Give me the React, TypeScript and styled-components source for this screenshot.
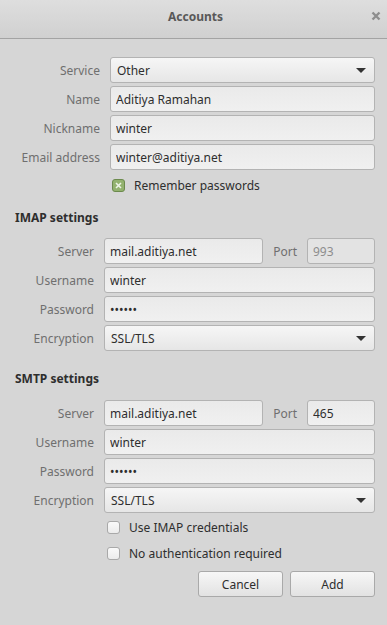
import styled, { createGlobalStyle } from "styled-components";

const Global = createGlobalStyle`
  html, body {
    margin: 0;
    padding: 0;
    background: #d6d6d6;
  }
  * {
    box-sizing: border-box;
  }
`

const Window = styled.div`
  width: 387px;
  height: 625px;
  display: flex;
  flex-direction: column;
  background: #d6d6d6;
  font-family: "Noto Sans", "DejaVu Sans", sans-serif;
  font-size: 12px;
  color: #2e2e2e;
  overflow: hidden;
`

const TitleBar = styled.div`
  height: 39px;
  flex-shrink: 0;
  display: flex;
  align-items: center;
  justify-content: center;
  position: relative;
  background: linear-gradient(#dedede, #d0d0d0);
  border-bottom: 1px solid #a3a3a3;
`

const Title = styled.span`
  font-weight: 700;
  color: #585858;
  margin-left: 4px;
  margin-top: -6px;
`

const CloseButton = styled.button`
  position: absolute;
  right: 3px;
  top: 8px;
  width: 16px;
  height: 16px;
  padding: 0;
  border: none;
  background: none;
  display: flex;
  align-items: center;
  justify-content: center;
`

const Content = styled.div`
  padding: 0 12px 0 15px;
  display: flex;
  flex-direction: column;
`

const FormGrid = styled.div<{ $labelWidth: number; $top: number }>`
  display: grid;
  grid-template-columns: ${(p) => p.$labelWidth}px minmax(0, 1fr);
  column-gap: 10px;
  row-gap: 3px;
  margin-top: ${(p) => p.$top}px;
`

const Label = styled.label`
  display: flex;
  align-items: center;
  justify-content: flex-end;
  height: 26px;
  color: #6f6f6f;
  white-space: nowrap;
`

const Input = styled.input`
  height: 26px;
  width: 100%;
  min-width: 0;
  border: 1px solid #b3b3b3;
  border-radius: 3px;
  background: linear-gradient(#eaeaea, #f0f0f0);
  padding: 0 5px;
  font-family: inherit;
  font-size: 12px;
  color: #2e2e2e;
  outline: none;
  &:disabled {
    color: #8d8d8d;
    background: #e3e3e3;
  }
`

const ServerInput = styled(Input)`
  flex: 1 1 0;
  width: 0;
`

const PortInput = styled(Input)`
  flex: 0 0 68px;
  width: 68px;
`

const Select = styled.div`
  height: 26px;
  display: flex;
  align-items: center;
  justify-content: space-between;
  padding: 0 8px 0 6px;
  border: 1px solid #b3b3b3;
  border-radius: 3px;
  background: linear-gradient(#f6f6f6, #e6e6e6);
  color: #2e2e2e;
`

const Arrow = styled.span`
  width: 0;
  height: 0;
  border-left: 5px solid transparent;
  border-right: 5px solid transparent;
  border-top: 5px solid #333;
`

const ServerRow = styled.div`
  display: flex;
  align-items: center;
  gap: 10px;
  min-width: 0;
`

const PortLabel = styled.span`
  color: #6f6f6f;
  flex-shrink: 0;
`

const Heading = styled.div<{ $top: number }>`
  font-weight: 700;
  color: #2e2e2e;
  line-height: 18px;
  margin-top: ${(p) => p.$top}px;
`

const CheckRow = styled.label<{ $left: number; $top: number }>`
  display: flex;
  align-items: center;
  gap: 9px;
  height: 20px;
  margin-top: ${(p) => p.$top}px;
  margin-left: ${(p) => p.$left}px;
  color: #2e2e2e;
`

const Box = styled.span<{ $checked?: boolean }>`
  width: 13px;
  height: 13px;
  border-radius: 3px;
  flex-shrink: 0;
  display: flex;
  align-items: center;
  justify-content: center;
  border: 1px solid ${(p) => (p.$checked ? "#6c8a4d" : "#a9a9a9")};
  background: ${(p) => (p.$checked ? "#93b26f" : "linear-gradient(#fafafa, #ececec)")};
`

const Buttons = styled.div`
  display: flex;
  justify-content: flex-end;
  gap: 7px;
  margin-top: 8px;
`

const Button = styled.button`
  width: 85px;
  height: 26px;
  border: 1px solid #a9a9a9;
  border-radius: 3px;
  background: linear-gradient(#f7f7f7, #e2e2e2);
  font-family: inherit;
  font-size: 12px;
  color: #2e2e2e;
`

function CheckMark() {
  return (
    <svg width="7" height="7" viewBox="0 0 7 7">
      <path d="M1 1 L6 6 M6 1 L1 6" stroke="#eef4e6" strokeWidth="1.6" />
    </svg>
  )
}

export default function App() {
  return (
    <Window>
      <Global />
      <TitleBar>
        <Title>Accounts</Title>
        <CloseButton aria-label="Close">
          <svg width="10" height="10" viewBox="0 0 10 10">
            <path d="M1.5 1.5 L8.5 8.5 M8.5 1.5 L1.5 8.5" stroke="#8e8e8e" strokeWidth="2.4" />
          </svg>
        </CloseButton>
      </TitleBar>
      <Content>
        <FormGrid $labelWidth={85} $top={18}>
          <Label>Service</Label>
          <Select>
            <span>Other</span>
            <Arrow />
          </Select>
          <Label>Name</Label>
          <Input defaultValue="Aditiya Ramahan" />
          <Label>Nickname</Label>
          <Input defaultValue="winter" />
          <Label>Email address</Label>
          <Input defaultValue="winter@aditiya.net" />
        </FormGrid>
        <CheckRow $left={97} $top={5}>
          <Box $checked>
            <CheckMark />
          </Box>
          Remember passwords
        </CheckRow>

        <Heading $top={14}>IMAP settings</Heading>
        <FormGrid $labelWidth={79} $top={11}>
          <Label>Server</Label>
          <ServerRow>
            <ServerInput defaultValue="mail.aditiya.net" />
            <PortLabel>Port</PortLabel>
            <PortInput defaultValue="993" disabled />
          </ServerRow>
          <Label>Username</Label>
          <Input defaultValue="winter" />
          <Label>Password</Label>
          <Input type="password" defaultValue="secret" />
          <Label>Encryption</Label>
          <Select>
            <span>SSL/TLS</span>
            <Arrow />
          </Select>
        </FormGrid>

        <Heading $top={19}>SMTP settings</Heading>
        <FormGrid $labelWidth={79} $top={12}>
          <Label>Server</Label>
          <ServerRow>
            <ServerInput defaultValue="mail.aditiya.net" />
            <PortLabel>Port</PortLabel>
            <PortInput defaultValue="465" />
          </ServerRow>
          <Label>Username</Label>
          <Input defaultValue="winter" />
          <Label>Password</Label>
          <Input type="password" defaultValue="secret" />
          <Label>Encryption</Label>
          <Select>
            <span>SSL/TLS</span>
            <Arrow />
          </Select>
        </FormGrid>
        <CheckRow $left={92} $top={4}>
          <Box />
          Use IMAP credentials
        </CheckRow>
        <CheckRow $left={92} $top={6}>
          <Box />
          No authentication required
        </CheckRow>
        <Buttons>
          <Button>Cancel</Button>
          <Button>Add</Button>
        </Buttons>
      </Content>
    </Window>
  )
}
